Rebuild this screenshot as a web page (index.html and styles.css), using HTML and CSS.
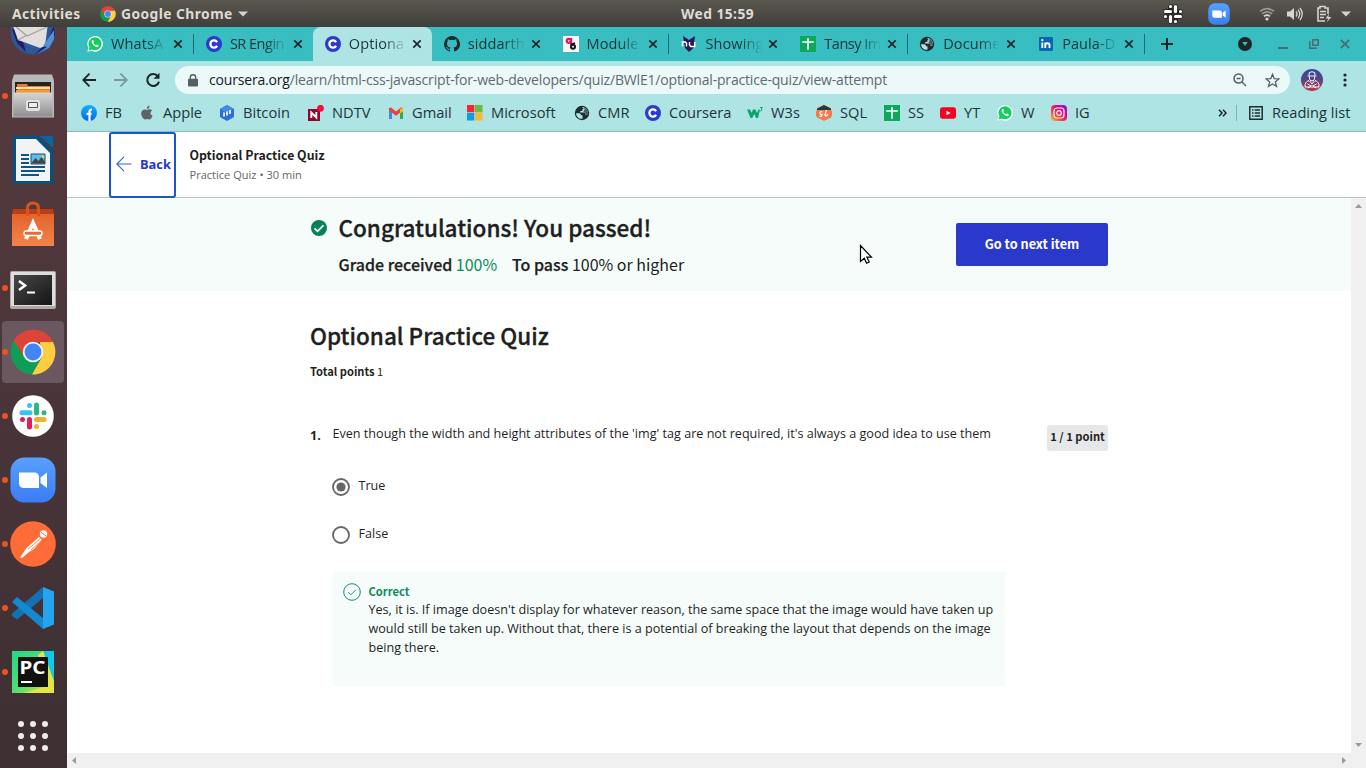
FILE: index.html
```html
<!DOCTYPE html>
<html lang="en">
<head>
<meta charset="utf-8">
<title>Optional Practice Quiz</title>
<link rel="stylesheet" href="styles.css">
</head>
<body>
<svg class="defs" width="0" height="0">
  <defs>
    <linearGradient id="zoomBlue" x1="0" y1="0" x2="0" y2="1"><stop offset="0" stop-color="#58a0ff"/><stop offset="1" stop-color="#3b7df5"/></linearGradient>
    <linearGradient id="metal" x1="0" y1="0" x2="0" y2="1"><stop offset="0" stop-color="#d6d6d6"/><stop offset="1" stop-color="#8f8f8f"/></linearGradient>
    <linearGradient id="bag" x1="0" y1="0" x2="0" y2="1"><stop offset="0" stop-color="#e4632b"/><stop offset="1" stop-color="#f3844c"/></linearGradient>
    <linearGradient id="insta" x1="0" y1="1" x2="1" y2="0"><stop offset="0" stop-color="#ffc63a"/><stop offset=".35" stop-color="#fb4038"/><stop offset=".65" stop-color="#e5008c"/><stop offset="1" stop-color="#6a20d8"/></linearGradient>
    <linearGradient id="fbBlue" x1="0" y1="0" x2="0" y2="1"><stop offset="0" stop-color="#19afff"/><stop offset="1" stop-color="#0866e0"/></linearGradient>
    <linearGradient id="avatar" x1="0" y1="0" x2="0" y2="1"><stop offset="0" stop-color="#35479e"/><stop offset=".5" stop-color="#5b447f"/><stop offset="1" stop-color="#c7364c"/></linearGradient>
    <linearGradient id="screen" x1="0" y1="0" x2="1" y2="1"><stop offset="0" stop-color="#484848"/><stop offset="1" stop-color="#151515"/></linearGradient>
    <linearGradient id="pycharm" x1="0" y1="0" x2="1" y2="1"><stop offset="0" stop-color="#20d789"/><stop offset=".5" stop-color="#52dd74"/><stop offset="1" stop-color="#d9ea3e"/></linearGradient>
    <symbol id="close" viewBox="0 0 10 10"><path d="M1.3 1.3l7.4 7.4M8.7 1.3L1.3 8.7" stroke="#1d2528" stroke-width="1.7" fill="none"/></symbol>
    <symbol id="chrome" viewBox="0 0 46 46"><path d="M23 23L3.9 11.5A22.5 22.5 0 0 1 43 13H23z" fill="#dc4437"/><path d="M3.9 11.5A22.5 22.5 0 0 0 22 45.5L32 28 14 28z" fill="#0f9d58"/><path d="M43 13A22.5 22.5 0 0 1 22 45.5L32 28 30 13z" fill="#ffcd40"/><path d="M3.9 11.5L14 28 23 13H43A22.5 22.5 0 0 0 3.9 11.5" fill="#dc4437"/><circle cx="23" cy="23" r="10.3" fill="#f1f1f1"/><circle cx="23" cy="23" r="8.4" fill="#4285f4"/></symbol>
    <symbol id="whatsapp" viewBox="0 0 16 16"><path d="M.3 15.8l1.1-4A7.8 7.8 0 1 1 4.6 14.8z" fill="#fff"/><path d="M1.600 14.400l.9-3.100A6.500 6.500 0 1 1 5 13.600z" fill="#12cf5e"/><path d="M5.400 4.100c-1.500 1-.8 3.300 1 5 1.800 1.800 4 2.900 5.100 1.400.5-.7.300-1-.2-1.300l-1.200-.6c-.6-.3-.8.700-1.300.6-1-.3-2.100-1.300-2.400-2.200-.1-.4.700-.7.500-1.300l-.5-1.200c-.2-.5-.6-.6-1-.4z" fill="#fff"/></symbol>
    <symbol id="coursera" viewBox="0 0 16 16"><circle cx="8" cy="8" r="8" fill="#2a3bd1"/><path d="M11.100 6.200A3.600 3.600 0 1 0 11.100 9.800" fill="none" stroke="#fff" stroke-width="2.300"/></symbol>
    <symbol id="github" viewBox="0 0 16 16"><path fill="#202b2e" d="M8 0a8 8 0 0 0-2.530 15.590c.4.070.550-.170.550-.380v-1.490c-2.010.370-2.530-.490-2.690-.940-.090-.230-.480-.940-.820-1.130-.280-.150-.680-.520-.010-.530.630-.010 1.080.580 1.230.820.720 1.210 1.870.870 2.330.660.070-.520.280-.870.510-1.070-1.780-.200-3.640-.890-3.640-3.950 0-.870.310-1.590.820-2.150-.080-.200-.360-1.020.080-2.120 0 0 .670-.210 2.200.820a7.500 7.500 0 0 1 4 0c1.530-1.040 2.200-.820 2.200-.820.440 1.100.160 1.920.080 2.120.510.560.820 1.270.820 2.150 0 3.070-1.870 3.750-3.650 3.950.290.250.540.730.540 1.480v2.200c0 .210.150.460.550.380A8 8 0 0 0 8 0z"/></symbol>
    <symbol id="module" viewBox="0 0 16 16"><path d="M0 0h16v16H0z" fill="#faf6f7"/><circle cx="5.700" cy="4.800" r="2" fill="none" stroke="#e51562" stroke-width="2.200"/><path d="M8.200 2v7" stroke="#e51562" stroke-width="2"/><circle cx="10" cy="10.800" r="2" fill="none" stroke="#161616" stroke-width="2"/><path d="M7.500 8.500l4.500-1.500" stroke="#161616" stroke-width="1.600"/></symbol>
    <symbol id="nu" viewBox="0 0 16 16"><path d="M2 0l6 4 6-4-1.500 12L8 16l-4-4z" fill="#29195c"/><path d="M1.500 10.500V6h2.700l1.300 1v3.500M8.500 6v3l1.200 1.500h4V6" stroke="#fff" stroke-width="1.400" fill="none"/></symbol>
    <symbol id="sheet" viewBox="0 0 16 16"><path d="M0 0h16v16H0z" fill="#0ca85d"/><path d="M2.200 6h11.600M8 2.300v11.400" stroke="#fff" stroke-width="1.700"/></symbol>
    <symbol id="globe" viewBox="0 0 16 16"><circle cx="8" cy="8" r="7.200" fill="#202d30"/><path d="M2 8.300h3.200q1.800 0 1.800 2h1.500v3.500C4.800 14 2.300 11.800 2 8.300M8 2.200h2.600V3q0 1.300-1.500 1.300H8.300v1.800H6.200v1.500h4.300q1 0 1 1v1.200h1.700c1.600-3.300-.2-6.500-3-7.500v2.200z" fill="#aee4e4"/><path d="M10.600 2.700q2.900 1.300 3.200 4.800l-.6 2.200q-1.500-.2-1.700-1.800-.3-1-2.200-.9l1-1.500z" fill="#202d30" fill-opacity=".75"/></symbol>
    <symbol id="linkedin" viewBox="0 0 16 16"><rect x="1" y="1" width="14" height="14" rx="1" fill="#0b66b5"/><path d="M4.300 6.500V12M7.300 12V6.500M7.300 9c0-2.200 4.200-2.500 4.200 0v3" stroke="#fff" stroke-width="1.900" fill="none"/><circle cx="4.300" cy="4.200" r="1.100" fill="#fff"/></symbol>
    <symbol id="slack" viewBox="0 0 28 28"><g stroke-width="5" stroke-linecap="round" fill="none"><path d="M10.500 3.500v0M3 10.700h8" stroke="#36c5f0"/><path d="M17.500 3v8M25 10.700v0" stroke="#2eb67d"/><path d="M17.500 17.600H25M17.500 24.600v0" stroke="#ecb22e"/><path d="M10.500 17.600V25M3.500 17.600v0" stroke="#e01e5a"/></g></symbol>
    <symbol id="slackmono" viewBox="0 0 20 20"><g stroke="#222" stroke-width="4.600" stroke-linecap="round"><path d="M7.500 2.500v5H2.500M12.500 2.500v5h5M12.500 17.500v-5h5M7.500 17.500v-5H2.500" fill="none"/></g><g stroke="#fff" stroke-width="3.200" stroke-linecap="round"><path d="M7.500 2.500v0M2.500 7.500h5M12.500 2.500v5M17.500 7.500v0M12.500 12.500h5M12.500 17.500v0M7.500 12.500v5M2.500 12.500v0"/></g></symbol>
    <symbol id="zoomcam" viewBox="0 0 46 46"><rect x=".5" y=".5" width="45" height="45" rx="14" fill="url(#zoomBlue)"/><path d="M9 15.500h15.500a4.500 4.500 0 0 1 4.500 4.500v11H13.500A4.500 4.500 0 0 1 9 26.500zM30.500 20.500l6.500-5v15.500l-6.500-5z" fill="#fff"/></symbol>
  </defs>
</svg>

<header class="topbar">
  <span class="activities">Activities</span>
  <svg class="tb-chrome" width="16" height="16"><use href="#chrome"/></svg>
  <span class="app-name">Google Chrome</span>
  <svg class="tb-caret" width="10" height="6"><path d="M0 .5h10L5 5.500z" fill="#d5d2cc"/></svg>
  <span class="clock">Wed 15:59</span>
  <div class="tray">
    <svg width="20" height="20"><use href="#slackmono"/></svg>
    <svg class="t-zoom" width="22" height="22"><use href="#zoomcam"/></svg>
    <svg class="t-wifi" width="16" height="16" viewBox="0 0 16 16" fill="none" stroke-width="1.700"><path d="M1 5.300q7-5.500 14 0M3 7.800q5-4 10 0" stroke="#99968e"/><path d="M5 10.300q3-2.400 6 0" stroke="#d7d4ce"/><circle cx="8" cy="13" r="1.600" fill="#d7d4ce"/></svg>
    <svg class="t-vol" width="16" height="16" viewBox="0 0 16 16"><path d="M0 5.500h3L7 2v12L3 10.500H0z" fill="#d7d4ce"/><path d="M9 5.500q2 2.500 0 5M11 3.700q3.500 4.300 0 8.600M13 2q4.500 6 0 12" fill="none" stroke="#d7d4ce" stroke-width="1.300"/></svg>
    <svg class="t-bat" width="16" height="18" viewBox="0 0 16 18" fill="none" stroke="#d7d4ce"><path d="M9 16H2V3h2V1.500h5V3h3v6" stroke-width="1.600"/><path d="M4 6.500h6M4 9.500h6M4 12.500h4" stroke-width="1.300"/><path d="M13 9l-3.500 4.500h3l-2 4 5-5.500h-3z" fill="#d7d4ce" stroke="none"/></svg>
    <svg class="t-caret" width="10" height="6"><path d="M0 .5h10L5 5.500z" fill="#d5d2cc"/></svg>
  </div>
</header>

<div class="desktop">
  <nav class="dock">
    <div class="cell first"><svg width="46" height="46" viewBox="0 0 46 46"><circle cx="23" cy="23" r="22.500" fill="#2d5798"/><path d="M2 20l5 14 9 9-6-20zM44 16l-7 18-12 11 12-5 8-14z" fill="#241b63"/><path d="M2 14h36l-3 23-5 2-22-8z" fill="#e2dedc"/><path d="M4 16l13 11 20-9M8 31l9-5" fill="none" stroke="#a5a0a0" stroke-width="1.200"/><path d="M44 21L33 37l4 1-11 7 13-6 5-9z" fill="#4f91da"/></svg></div>
    <div class="cell dot"><svg width="42" height="44" viewBox="0 0 42 44"><path d="M2 .5h38l2 6v37H0v-37z" fill="#b9b9b9"/><path d="M3 8h36v13H3z" fill="#242424"/><path d="M5 10h10l1 2h22v7H5z" fill="#e87a2c"/><path d="M4 13h34v2H4z" fill="#ffe3ad"/><path d="M4 16h34v3H4z" fill="#f39a3b"/><path d="M1.500 18.500h39v24h-39z" fill="url(#metal)"/><rect x="14" y="26" width="14" height="11" rx="2" fill="#e2e2e2"/><path d="M16.500 28.500h9v5h-9z" fill="#eee" stroke="#555"/></svg></div>
    <div class="cell"><svg width="40" height="48" viewBox="0 0 40 48"><path d="M2 0h23l15 15v31q0 2-2 2H2q-2 0-2-2V2q0-2 2-2z" fill="#04527f"/><path d="M3 3h20l14 14v28H3z" fill="#f3f3f3"/><path d="M27 0h11q2 0 2 2v10z" fill="#0568a5"/><path d="M8 19h8M8 23h8M8 27h8M8 31h24M8 35h24M8 39h18" stroke="#0d5685" stroke-width="2"/><path d="M18 18h14v10H18z" fill="#5dbcf0" stroke="#0d5685"/><path d="M18.500 27l4-5 3 3 3-4 3.500 5v1.500H18.500z" fill="#444"/><circle cx="30" cy="20.500" r="1.500" fill="#f6c84a"/></svg></div>
    <div class="cell"><svg width="42" height="46" viewBox="0 0 42 46"><path d="M1 8h40l1 6H0z" fill="#b93f17"/><path d="M0 13h42v32H0z" fill="url(#bag)"/><path d="M15.500 15V7q0-5 5.500-5t5.500 5v8" fill="none" stroke="#d9531f" stroke-width="3"/><path d="M14 38l7-16 7 16" fill="none" stroke="#fff" stroke-width="4"/><rect x="12" y="30" width="18" height="4.500" rx="2.200" fill="#e76a32" stroke="#fff" stroke-width="1.500"/></svg></div>
    <div class="cell dot term"><svg width="46" height="38" viewBox="0 0 46 38"><rect width="46" height="38" rx="2" fill="#a9a9a9"/><path d="M1 1h44v34H1z" fill="#deddda"/><path d="M4 4h38v30H4z" fill="url(#screen)"/><path d="M9 10l6 4.500L9 19" stroke="#fff" stroke-width="2.600" fill="none"/><path d="M17 21.500h8" stroke="#fff" stroke-width="2"/></svg></div>
    <div class="cell dot active"><svg width="46" height="46"><use href="#chrome"/></svg></div>
    <div class="cell dot"><svg width="42" height="42" viewBox="0 0 42 42"><circle cx="21" cy="21" r="20.800" fill="#fff"/><use href="#slack" x="7" y="7" width="28" height="28"/></svg></div>
    <div class="cell dot"><svg width="46" height="46"><use href="#zoomcam"/></svg></div>
    <div class="cell dot"><svg width="46" height="46" viewBox="0 0 46 46"><circle cx="23" cy="23" r="22.800" fill="#ff6c37"/><circle cx="33.500" cy="13" r="3.700" fill="#fff"/><path d="M29 16l3 3-8 9-5 3-7 6-2-.5 7-10z" fill="#fff"/><path d="M18 28l12-10M21 29l11-10" stroke="#ff6c37" stroke-width=".8"/><path d="M31 11l5 4" stroke="#ff6c37"/></svg></div>
    <div class="cell dot"><svg width="42" height="42" viewBox="0 0 42 42"><path d="M0 26.500L31 0v11L5 32.500 0 29z" fill="#1270b3"/><path d="M0 15l5-5 26 21v11z" fill="#1489d1"/><path d="M31 0l11 4.500v33L31 42z" fill="#25a5ed"/></svg></div>
    <div class="cell dot"><svg width="42" height="42" viewBox="0 0 42 42"><path d="M0 0h42v42H0z" fill="url(#pycharm)"/><path d="M31 0h11v30z" fill="#10c8e9"/><path d="M26 4l5-4 11 31v11H12l20-6z" fill="#e3e545"/><path d="M6 6h30v30H6z" fill="#111"/><path d="M9 31h11" stroke="#fff" stroke-width="2"/><text class="pc-text" x="7.500" y="23" textLength="26" lengthAdjust="spacingAndGlyphs">PC</text></svg></div>
    <div class="cell"><svg width="32" height="32" viewBox="0 0 32 32" fill="#efedec"><circle cx="4" cy="4" r="3"/><circle cx="16" cy="4" r="3"/><circle cx="28" cy="4" r="3"/><circle cx="4" cy="16" r="3"/><circle cx="16" cy="16" r="3"/><circle cx="28" cy="16" r="3"/><circle cx="4" cy="28" r="3"/><circle cx="16" cy="28" r="3"/><circle cx="28" cy="28" r="3"/></svg></div>
  </nav>

  <main class="browser">
    <div class="tabs">
      <div class="tab"><svg class="fav"><use href="#whatsapp"/></svg><span class="label">WhatsA</span><svg class="x"><use href="#close"/></svg></div>
      <div class="tab nosep"><svg class="fav"><use href="#coursera"/></svg><span class="label tight">SR Engin</span><svg class="x"><use href="#close"/></svg></div>
      <div class="tab current nosep"><svg class="fav"><use href="#coursera"/></svg><span class="label">Optiona</span><svg class="x"><use href="#close"/></svg></div>
      <div class="tab"><svg class="fav"><use href="#github"/></svg><span class="label">siddarth</span><svg class="x"><use href="#close"/></svg></div>
      <div class="tab"><svg class="fav"><use href="#module"/></svg><span class="label">Module</span><svg class="x"><use href="#close"/></svg></div>
      <div class="tab"><svg class="fav"><use href="#nu"/></svg><span class="label">Showing</span><svg class="x"><use href="#close"/></svg></div>
      <div class="tab"><svg class="fav"><use href="#sheet"/></svg><span class="label tight">Tansy Im</span><svg class="x"><use href="#close"/></svg></div>
      <div class="tab"><svg class="fav"><use href="#globe"/></svg><span class="label">Docume</span><svg class="x"><use href="#close"/></svg></div>
      <div class="tab"><svg class="fav"><use href="#linkedin"/></svg><span class="label">Paula-D</span><svg class="x"><use href="#close"/></svg></div>
      <svg class="plus" width="12" height="12"><path d="M6 0v12M0 6h12" stroke="#1d2528" stroke-width="2"/></svg>
      <div class="window-controls">
        <svg width="14" height="14"><circle cx="7" cy="7" r="7" fill="#202528"/><path d="M4.200 5h5.600L7 9z" fill="#38bec1"/></svg>
        <svg width="10" height="10"><path d="M0 9h10" stroke="#4d6c6f" stroke-width="2"/></svg>
        <svg width="10" height="10"><path d="M3.800.8h5.400v5.400H3.800zM.8 2v7.200H8" fill="none" stroke="#4d6c6f" stroke-width="1.500"/></svg>
        <svg width="10" height="10"><path d="M.8.800l8.400 8.400M9.200.8L.8 9.200" stroke="#4d6c6f" stroke-width="1.800"/></svg>
      </div>
    </div>

    <div class="toolbar">
      <svg class="nav" width="14" height="14"><path d="M14 7H1M7.500.7L1.200 7l6.300 6.300" fill="none" stroke="#1d2528" stroke-width="1.800"/></svg>
      <svg class="nav" width="14" height="14"><path d="M0 7h13M6.500.7L12.800 7l-6.300 6.300" fill="none" stroke="#79999b" stroke-width="1.800"/></svg>
      <svg class="nav" width="16" height="16"><path d="M13 4.300A6 6 0 1 0 14 9.600" fill="none" stroke="#1d2528" stroke-width="2"/><path d="M14.500.8v6h-6z" fill="#1d2528"/></svg>
      <div class="omnibox">
        <svg width="10" height="13"><path d="M1 4.800h8q1 0 1 1v5.700q0 1-1 1H1q-1 0-1-1V5.800q0-1 1-1z" fill="#566063"/><path d="M2.300 5V3.500a2.700 2.700 0 0 1 5.400 0V5" fill="none" stroke="#566063" stroke-width="1.400"/></svg>
        <span class="url"><b>coursera.org</b>/learn/html-css-javascript-for-web-developers/quiz/BWlE1/optional-practice-quiz/view-attempt</span>
        <svg class="mag" width="14" height="14"><circle cx="5.500" cy="5.500" r="4.500" fill="none" stroke="#566063" stroke-width="1.500"/><path d="M3.500 5.500h4M9 9l4 4" stroke="#566063" stroke-width="1.400"/></svg>
        <svg class="star" width="15" height="15" viewBox="0 0 15 15"><path d="M7.500 1.300l1.700 4.300 4.700.3-3.600 3 1.200 4.500-4-2.500-4 2.500 1.200-4.500-3.600-3 4.700-.3z" fill="none" stroke="#566063" stroke-width="1.300"/></svg>
      </div>
      <svg class="avatar" width="22" height="22" viewBox="0 0 22 22"><circle cx="11" cy="11" r="11" fill="url(#avatar)"/><g fill="none" stroke="#fff" stroke-width="1"><path d="M8 6.500l.3-3q2.700-1.500 5.400 0l.3 3M6.500 7h9M8.500 7.500v2q0 2.500 2.500 2.500t2.500-2.500v-2M8 11.500Q3.500 13 4 18h14Q18.500 13 14 11.500M8.500 12l2.500 3 2.500-3M6.500 15l4 2-4 2M15.500 15l-4 2 4 2"/></g></svg>
      <svg width="4" height="14"><g fill="#1d2528"><circle cx="2" cy="2" r="1.600"/><circle cx="2" cy="7" r="1.600"/><circle cx="2" cy="12" r="1.600"/></g></svg>
    </div>

    <div class="bookmarks">
      <div class="bm"><svg class="fav" viewBox="0 0 16 16"><circle cx="8" cy="8" r="8" fill="url(#fbBlue)"/><path d="M8.500 16V6.500q0-2 2.500-2M5.500 8.800h5" stroke="#fff" stroke-width="2.200" fill="none"/></svg>FB</div>
      <div class="bm"><svg class="fav" viewBox="0 0 16 16"><path d="M8 5c1-.5 4-1.500 5 .8-2.300 1.300-1.700 4.200.5 5-1.500 4.200-3 4-5.200 3.200C6 15 4.700 14.700 3 11.500 1 7.800 3 3 8 5zM7.800 4q0-3 2.800-3.500Q10.700 3.500 7.800 4" fill="#5f6368"/></svg>Apple</div>
      <div class="bm"><svg class="fav" viewBox="0 0 16 16"><path d="M8 0l7 4v8l-7 4-7-4V4z" fill="#2e6ed6"/><path d="M8 0l7 4-7 4-7-4z" fill="#3f8be8"/><path d="M5 7.500v4M8 6.500v4M11 5v4" stroke="#dcefff" stroke-width="1.900"/></svg>Bitcoin</div>
      <div class="bm"><svg class="fav" viewBox="0 0 16 16"><path d="M0 4h12v12H0z" fill="#93062b"/><path d="M3.300 13V7.500l5 5V7" fill="none" stroke="#fff" stroke-width="1.900"/><circle cx="12.500" cy="3.300" r="3.400" fill="#f80c36"/></svg>NDTV</div>
      <div class="bm"><svg class="fav" viewBox="0 0 16 16"><path d="M1 4v10h3V7z" fill="#4285f4"/><path d="M15 4v10h-3V7z" fill="#34a853"/><path d="M1 3l2-.5 5 4 5-4 2 .5v2.500l-7 5.300-7-5.300z" fill="#ea4335"/><path d="M12 4l3-1.500v4l-3 2z" fill="#fbbc04"/></svg>Gmail</div>
      <div class="bm"><svg class="fav" viewBox="0 0 16 16"><path d="M0 0h7.300v7.300H0z" fill="#f8252e"/><path d="M8 0h7.500v7.300H8z" fill="#6bbc38"/><path d="M0 8h7.300v7.500H0z" fill="#0b9eea"/><path d="M8 8h7.500v7.500H8z" fill="#fdb832"/></svg>Microsoft</div>
      <div class="bm"><svg class="fav"><use href="#globe"/></svg>CMR</div>
      <div class="bm"><svg class="fav"><use href="#coursera"/></svg>Coursera</div>
      <div class="bm"><svg class="fav" viewBox="0 0 16 16"><path d="M0 4.500h3.200l1.300 3.500L6 4.500h2.500L10 8l1.500-3.500H13L11 13H9L7.300 9l-2 4H3.500z" fill="#0ba56c"/><path d="M13 2.500h2.300l-1 1.500q2 1-1 2" fill="none" stroke="#0ba56c"/></svg>W3s</div>
      <div class="bm"><svg class="fav" viewBox="0 0 16 16"><path d="M8 0l7 3.500v9L8 16l-7-3.500v-9z" fill="#f47b4e"/><path d="M8 0l7 3.500V5H1V3.500z" fill="#333"/><path d="M0 5.500h16v6H0z" fill="#f47b4e"/><path d="M6.500 7Q3.500 6 4 8t2 1.500Q6 12 3.500 11M10.500 5L9 10q.5 2 3-.5" fill="none" stroke="#fff" stroke-width="1.200"/></svg>SQL</div>
      <div class="bm"><svg class="fav"><use href="#sheet"/></svg>SS</div>
      <div class="bm"><svg class="fav" viewBox="0 0 16 16"><rect y="2.300" width="16" height="11.500" rx="2.800" fill="#f90020"/><path d="M6.500 5.800v4.400L10.500 8z" fill="#fff"/></svg>YT</div>
      <div class="bm"><svg class="fav"><use href="#whatsapp"/></svg>W</div>
      <div class="bm"><svg class="fav" viewBox="0 0 16 16"><rect width="16" height="16" rx="4" fill="url(#insta)"/><rect x="3" y="3" width="10" height="10" rx="3" fill="none" stroke="#fff" stroke-width="1.200"/><circle cx="8" cy="8" r="2.300" fill="none" stroke="#fff" stroke-width="1.200"/></svg>IG</div>
      <svg class="more" width="9" height="8"><path d="M1 .8L4 4 1 7.200M5 .8L8 4 5 7.200" fill="none" stroke="#1d2528" stroke-width="1.500"/></svg>
      <span class="rule"></span>
      <div class="bm reading"><svg class="fav" viewBox="0 0 16 16"><path d="M1.800 1.800h12.400v12.400H1.800z" fill="none" stroke="#202d30" stroke-width="1.500"/><path d="M4 5h1.500M4 8h1.500M4 11h1.500M6.700 5H12M6.700 8H12M6.700 11H12" stroke="#202d30" stroke-width="1.400"/></svg>Reading list</div>
    </div>

    <header class="quiz-header">
      <a class="back"><svg width="16" height="16"><path d="M15.500 8H1M8 .8L.8 8 8 15.200" fill="none" stroke="#3663d2" stroke-width="1.100"/></svg><span>Back</span></a>
      <div class="quiz-id"><div class="quiz-name">Optional Practice Quiz</div><div class="quiz-sub">Practice Quiz • 30 min</div></div>
    </header>

    <div class="scroll-area">
      <div class="page">
        <section class="banner">
          <svg class="pass" width="16" height="16"><circle cx="8" cy="8" r="8" fill="#048356"/><path d="M3.500 8.300l3 3 6-6" fill="none" stroke="#fff" stroke-width="1.800"/></svg>
          <div class="result">
            <h2>Congratulations! You passed!</h2>
            <p><b>Grade received</b> <span class="green">100%</span><b class="to-pass">To pass</b> 100% or higher</p>
          </div>
          <button class="next">Go to next item</button>
        </section>
        <section class="quiz">
          <h1>Optional Practice Quiz</h1>
          <p class="total"><b>Total points</b> 1</p>
          <div class="question">
            <div class="num">1.</div>
            <div class="q-body">
              <p class="prompt">Even though the width and height attributes of the 'img' tag are not required, it's always a good idea to use them</p>
              <div class="option"><svg width="18" height="18"><circle cx="9" cy="9" r="8" fill="none" stroke="#666" stroke-width="1.800"/><circle cx="9" cy="9" r="4.600" fill="#666"/></svg><span>True</span></div>
              <div class="option"><svg width="18" height="18"><circle cx="9" cy="9" r="8" fill="none" stroke="#666" stroke-width="1.800"/></svg><span>False</span></div>
              <div class="feedback">
                <svg width="18" height="18"><circle cx="9" cy="9" r="8.300" fill="none" stroke="#16905f"/><path d="M5.200 9.200l2.600 2.600 5-5" fill="none" stroke="#16905f"/></svg>
                <div><div class="correct">Correct</div><p>Yes, it is. If image doesn't display for whatever reason, the same space that the image would have taken up<br>would still be taken up. Without that, there is a potential of breaking the layout that depends on the image<br>being there.</p></div>
              </div>
            </div>
            <div class="points">1 / 1 point</div>
          </div>
        </section>
        <svg class="cursor" width="14" height="21" viewBox="0 0 14 21"><path d="M1.500 1.500v16l3.800-3.300 2.300 5 2.600-1.200-2.300-4.800h4.600z" fill="#fff" stroke="#000" stroke-width="1.200"/></svg>
      </div>
      <div class="vbar"><svg width="7" height="4"><path d="M0 4h7L3.500 0z" fill="#9a9a9a"/></svg><svg width="7" height="4"><path d="M0 0h7L3.500 4z" fill="#9a9a9a"/></svg></div>
    </div>
    <div class="hbar"><svg width="4" height="7"><path d="M4 0v7L0 3.500z" fill="#9a9a9a"/></svg><svg width="4" height="7"><path d="M0 0v7l4-3.500z" fill="#9a9a9a"/></svg></div>
  </main>
</div>
</body>
</html>
```
FILE: styles.css
```css
* { box-sizing: border-box; }
body { margin: 0; width: 1366px; height: 768px; overflow: hidden; background: #fff; font-family: "Open Sans", sans-serif; color: #1f1f1f; }
p, h1, h2 { margin: 0; }
svg { display: block; flex: none; }
.defs { position: absolute; }

/* system bar */
.topbar { height: 27px; background: linear-gradient(#5b5850, #403e39); display: grid; grid-template-columns: 88px 21px 117px 443px 1fr 213px; align-items: center; padding-left: 12px; color: #dfdbd2; font: bold 13.800px/27px "Noto Sans", sans-serif; letter-spacing: .45px; white-space: nowrap; }
.tray { display: flex; align-items: center; padding-left: 10px; }
.t-zoom { margin-left: 25px; }
.t-wifi { margin-left: 29px; }
.t-vol { margin-left: 12px; }
.t-bat { margin-left: 13px; }
.t-caret { margin-left: 9px; }

.desktop { display: flex; height: 741px; }
.dock { width: 67px; background: linear-gradient(#573a3f, #4b363a 45%, #3d2f32); }
.cell { height: 64px; display: flex; align-items: center; padding: 0 8px 0 7px; }
.cell svg { margin-left: auto; margin-right: auto; }
.cell::before { content: ""; width: 6px; height: 6px; margin: 0 -1px 0 -5px; border-radius: 50%; }
.cell.dot::before { background: #e95420; }
.cell.first { height: 37px; align-items: flex-end; overflow: hidden; padding-bottom: 9px; }
.cell.term svg { margin-top: 4px; }
.cell.active { height: 62px; margin: 1px 3px 1px 2px; padding: 0 0 0 5px; border-radius: 4px; background: #6b5760; }
.cell.active svg { margin-right: 8px; }
.pc-text { font: bold 17px "Noto Sans", sans-serif; fill: #fff; }

/* browser chrome */
.browser { width: 1299px; display: flex; flex-direction: column; }
.fav { width: 16px; height: 16px; }
.tabs { height: 34px; background: #38bec1; display: flex; padding-left: 8px; align-items: center; font: 14.500px/34px "Open Sans", sans-serif; color: #1d3437; letter-spacing: .1px; }
.tab { flex: none; width: 118.900px; height: 34px; display: flex; align-items: center; padding-left: 12px; }
.tab::after { content: ""; width: 1px; height: 20px; margin-left: 10px; background: #1d6d71; }
.tab.nosep::after { display: none; }
.tab.current { background: #aee4e4; border-radius: 8px 8px 0 0; width: 119.500px; margin-right: -.6px; }
.label { width: 57px; margin-left: 8px; white-space: nowrap; -webkit-mask-image: linear-gradient(90deg, #000 62%, transparent 101%); mask-image: linear-gradient(90deg, #000 62%, transparent 101%); }
.tight { letter-spacing: -.5px; }
.x { width: 10px; height: 10px; margin-left: 6px; }
.plus { margin-left: 16px; }
.window-controls { margin: 0 16px 0 auto; display: flex; align-items: center; gap: 21px; }
.window-controls svg:first-child { margin-right: 5px; }
.toolbar { height: 38px; background: #aee4e4; display: flex; align-items: center; padding-left: 15px; }
.nav { margin-right: 18px; }
.nav:nth-child(3) { margin: 0 14px 0 -1px; }
.omnibox { flex: none; width: 1115px; height: 28px; border-radius: 14px; background: #ebf9f8; display: flex; align-items: center; padding: 0 10px 0 13px; }
.url { margin-left: 11px; white-space: nowrap; font: 14px/28px "Open Sans", sans-serif; letter-spacing: -.18px; color: #5e6b6d; }
.url b { font-weight: 400; color: #15191b; }
.mag { margin-left: auto; }
.star { margin-left: 18px; }
.avatar { margin: 0 20px 0 11px; }
.bookmarks { height: 33px; background: #aee4e4; border-bottom: 1px solid #8fb9ba; display: grid; grid-template-columns: 58px 80px 89px 80px 79px 107px 71px 102px 69px 68px 56px 57px 54px 167px 18px 12px 1fr; align-items: center; padding: 0 0 5px 14px; font: 14.650px/27px "Open Sans", sans-serif; color: #1d3437; white-space: nowrap; }
.bm { display: flex; align-items: center; gap: 8px; }
.rule { width: 1px; height: 16px; background: #7fb3b4; }

/* quiz header */
.quiz-header { height: 66px; border-bottom: 1px solid #b9c6c6; display: flex; padding-left: 42px; background: #fff; }
.back { width: 67px; height: 66px; border: 2px solid #1c55cc; border-radius: 3px; display: flex; align-items: center; gap: 8px; padding: 0 0 2px 5px; color: #2338c6; font: bold 12.800px/20px "Open Sans", sans-serif; }
.quiz-id { padding: 13px 0 0 13.500px; }
.quiz-name { font: bold 12.350px/20px "Noto Sans CJK SC", sans-serif; white-space: nowrap; }
.quiz-sub { font: 11.050px/19px "Open Sans", sans-serif; color: #666; white-space: nowrap; }

/* page */
.scroll-area { height: 555px; display: flex; }
.page { position: relative; width: 1284px; background: #fff; }
.vbar { width: 15px; background: #f0f0f0; display: flex; flex-direction: column; justify-content: space-between; align-items: center; padding: 6px 0; }
.hbar { height: 15px; background: #f0f0f0; display: flex; justify-content: space-between; align-items: center; padding: 0 20px 0 5px; }
.banner { height: 93px; background: #f5fcfa; display: flex; padding: 13px 243px 0; white-space: nowrap; font-family: "Noto Sans CJK SC", sans-serif; }
.pass { margin: 9px 11.500px 0 1px; }
.banner h2 { font-size: 22.500px; line-height: 32px; font-weight: 500; -webkit-text-stroke: .35px #1f1f1f; }
.banner p { margin-top: 9px; font-size: 15.970px; line-height: 24px; }
.banner b { font-weight: 500; -webkit-text-stroke: .25px #1f1f1f; }
.to-pass { margin-left: 15px; }
.green { color: #0b8b5c; }
.next { width: 152px; height: 43px; margin: 12px 0 0 auto; padding: 0 6px 2px; border: 0; border-radius: 2px; background: #2a39cc; color: #fff; font: bold 12.700px/20px "Noto Sans CJK SC", sans-serif; }
.quiz { padding: 27px 243px 0; }
h1 { font: 500 22.500px/34px "Noto Sans CJK SC", sans-serif; -webkit-text-stroke: .35px #1f1f1f; }
.total { margin-top: 9px; font: 11.150px/20px "Noto Sans CJK SC", sans-serif; }
.question { display: flex; margin-top: 43px; font-size: 12.600px; }
.num { width: 22.500px; padding-top: 3px; font-weight: bold; line-height: 18px; }
.q-body { width: 672.500px; white-space: nowrap; }
.prompt { padding-top: 1px; line-height: 18px; margin-bottom: 24px; }
.option { height: 48px; display: flex; gap: 9px; padding-top: 11px; margin-left: -1px; line-height: 18px; }
.option span { margin-top: -1px; }
.feedback { height: 114px; margin-top: 9px; background: #f5fcfa; display: flex; gap: 8px; padding: 10px 0 0 10px; line-height: 19px; }
.feedback svg { margin-top: 1px; }
.correct { font: bold 11.200px/18px "Noto Sans CJK SC", sans-serif; color: #0b8b5c; }
.points { width: 61px; height: 26px; margin: 1px 0 0 auto; border-radius: 3px; background: #e5e7e8; text-align: center; font: bold 11.200px/22px "Noto Sans CJK SC", sans-serif; white-space: nowrap; }
.cursor { position: absolute; left: 792px; top: 46px; }
```
